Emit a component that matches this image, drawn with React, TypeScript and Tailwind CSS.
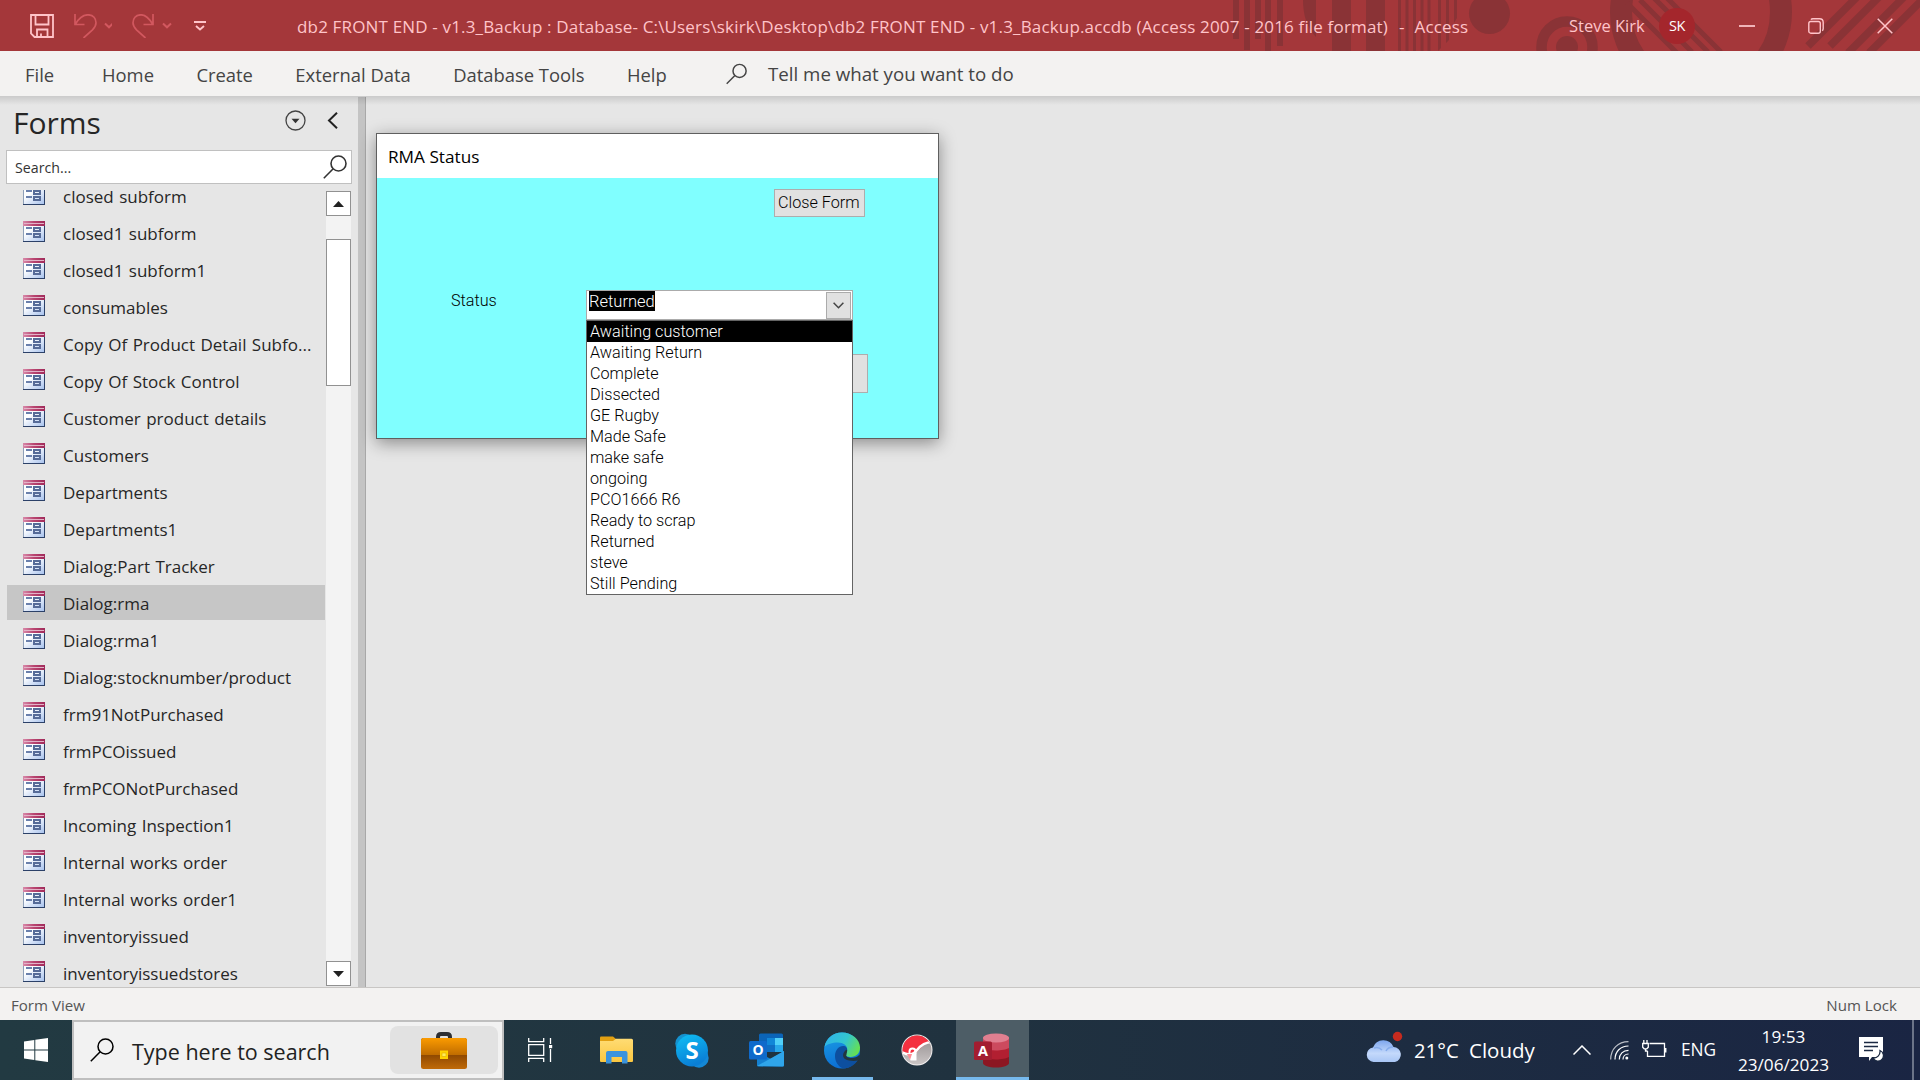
import { useState } from 'react'
import type { ReactNode } from 'react'

const TABS = ['Home', 'Create', 'External Data', 'Database Tools', 'Help']

const FORMS = [
  'closed subform',
  'closed1 subform',
  'closed1 subform1',
  'consumables',
  'Copy Of Product Detail Subfo...',
  'Copy Of Stock Control',
  'Customer product details',
  'Customers',
  'Departments',
  'Departments1',
  'Dialog:Part Tracker',
  'Dialog:rma',
  'Dialog:rma1',
  'Dialog:stocknumber/product',
  'frm91NotPurchased',
  'frmPCOissued',
  'frmPCONotPurchased',
  'Incoming Inspection1',
  'Internal works order',
  'Internal works order1',
  'inventoryissued',
  'inventoryissuedstores',
]

const STATUSES = [
  'Awaiting customer',
  'Awaiting Return',
  'Complete',
  'Dissected',
  'GE Rugby',
  'Made Safe',
  'make safe',
  'ongoing',
  'PCO1666 R6',
  'Ready to scrap',
  'Returned',
  'steve',
  'Still Pending',
]

function TitleArt() {
  return (
    <svg className="absolute top-0 left-[1220px]" width="700" height="51" viewBox="1220 0 700 51" fill="#8a3336">
      <rect x="1233" width="6" height="39" />
      <rect x="1244" width="6" height="50" />
      <rect x="1255" width="6" height="39" />
      <rect x="1265" width="6" height="51" />
      <rect x="1277" width="6" height="46" />
      <path d="M1303 0h13v37c-9-9-13-22-13-37z" />
      <rect x="1332" width="19" height="51" />
      <rect x="1366" width="19" height="51" />
      <path d="M1398 0h3v51h-3zM1405.500 0h3v51h-3zM1413 0h3v51h-3zM1420.500 0h3v51h-3zM1427.500 0h3v51h-3zM1438 0h3v48l-3 3zM1446 0h3v40l-3 3zM1454 0h3v18l-3 5z" />
      <circle cx="1489.500" cy="13.500" r="20.500" />
      <g fill="none" stroke="#8a3336">
        <circle cx="1567" cy="47" r="25.500" strokeWidth="10.500" />
        <circle cx="1701" cy="12" r="80" strokeWidth="22" />
        <path strokeWidth="5" d="M1627 3l50 50M1640 0l52 52M1652 -4l56 56M1663 -6l58 58" />
        <path strokeWidth="7.500" d="M1808 46l54-54M1830 46l54-54M1848 53l60-60M1869 53l60-60" />
      </g>
      <circle cx="1567" cy="47" r="11" />
    </svg>
  )
}

function Magnifier({ className, width = 1.6 }: { className: string; width?: number }) {
  return (
    <svg className={className} viewBox="0 0 24 24" fill="none" stroke="currentColor" strokeWidth={width}>
      <circle cx="15.500" cy="8.500" r="7.500" />
      <path d="M10.200 13.800L.8 23.200" />
    </svg>
  )
}

function FormIcon() {
  return (
    <svg width="22" height="21" viewBox="0 0 22 21" className="shrink-0">
      <defs>
        <linearGradient id="formBar" x1="0" x2="1">
          <stop offset="0" stopColor="#d88aaa" />
          <stop offset=".5" stopColor="#b8446f" />
          <stop offset="1" stopColor="#a02a5a" />
        </linearGradient>
        <linearGradient id="formBody" x1="0" y1="0" x2="1" y2="1">
          <stop offset=".3" stopColor="#fdfeff" />
          <stop offset="1" stopColor="#a9c3ee" />
        </linearGradient>
      </defs>
      <rect width="22" height="21" fill="#2c4168" />
      <rect width="1" height="20" fill="#8fa0b8" />
      <rect x="1" y="5" width="20" height="15" fill="url(#formBody)" />
      <rect width="22" height="5" fill="url(#formBar)" />
      <rect x="1" y="2" width="20" height="1" fill="#e3b4c8" />
      <path fill="#6a80ac" d="M3 6h6v2H3zM3 12h6v2H3z" />
      <path fill="#566b98" fillRule="evenodd" d="M10 6h8v5h-8zM12 8v1h4V8zM10 12h8v5h-8zM12 14v1h4v-1z" />
    </svg>
  )
}

function TitleBar() {
  return (
    <header className="relative flex h-[51px] shrink-0 items-center bg-[#a4373a] text-[#ffc4c9]">
      <TitleArt />
      <div className="relative flex w-[297px] items-center pl-[30px]">
        <svg width="24" height="24" viewBox="0 0 24 24" fill="none" stroke="currentColor" strokeWidth="1.800">
          <path d="M1 1h22v22H4.500L1 19.500zM5.500 1v9.500h13V1M7 23v-7.500h10.500V23M11 23v-3.500" />
        </svg>
        <svg className="ml-5" width="38" height="24" viewBox="0 0 38 24" fill="none" stroke="#d2585f" strokeWidth="1.700">
          <path d="M1 0v10.500h9.500M1.500 10C5 4 9 .8 14 .8c5.500 0 8 4 8 8 0 3-1.500 5-3.500 7L9.500 24" />
          <path d="M31 9.500l4 3.800 4-3.800" strokeWidth="2" />
        </svg>
        <svg className="ml-5" width="42" height="24" viewBox="0 0 42 24" fill="none" stroke="#d2585f" strokeWidth="1.700">
          <path d="M21 0v10.500h-9.500M20.500 10C17 4 13 .8 9 .8c-5.500 0-8 4-8 8 0 3 1.500 5 3.500 7l9 8.200" />
          <path d="M31 9.500l4 3.800 4-3.800" strokeWidth="2" />
        </svg>
        <svg className="ml-5" width="12" height="10" viewBox="0 0 12 10" fill="none" stroke="currentColor" strokeWidth="1.900">
          <path d="M0 1h12M2 5l4 3.500L10 5" />
        </svg>
      </div>
      <div className="relative flex w-[1272px] pt-[2px] text-[17px] tracking-[0.165px] whitespace-pre">
        <span>
          db2 FRONT END - v1.3_Backup : Database- C:\Users\skirk\Desktop\db2 FRONT END - v1.3_Backup.accdb (Access 2007 - 2016 file format)
        </span>
        <span className="pl-[11px]">-</span>
        <span className="pl-[10px]">Access</span>
      </div>
      <div className="relative flex flex-1 items-center">
        <span className="w-[90px] pt-[2px] text-[16.500px]">Steve Kirk</span>
        <span className="flex size-9 items-center justify-center rounded-full bg-[#a4262c] text-[14.500px] tracking-[-0.5px] text-white">
          SK
        </span>
        <span className="ml-11 h-0.5 w-4 bg-[#f0b4b8]" />
        <svg className="ml-[53px]" width="16" height="16" viewBox="0 0 16 16" fill="none" stroke="currentColor" strokeWidth="1.400">
          <rect x=".8" y="3.500" width="11.500" height="11.700" rx="2" />
          <path d="M3 1.700Q3.500.8 5 .8h6.500q3.700 0 3.700 3.700v6q0 1.500-1 2.200" />
        </svg>
        <svg className="ml-[53px]" width="16" height="16" viewBox="0 0 16 16" fill="none" stroke="currentColor" strokeWidth="1.500">
          <path d="M.7.7l14.600 14.600M15.300.7L.7 15.300" />
        </svg>
      </div>
    </header>
  )
}

function Ribbon() {
  return (
    <nav className="flex h-[45px] shrink-0 items-center bg-[#f3f2f1] pl-[25px] text-[18.400px] text-[#444]">
      <span className="w-[77px] pt-[3px]">File</span>
      <div className="flex w-[624px] gap-[42.400px] pt-[3px]">
        {TABS.map((tab) => (
          <span key={tab}>{tab}</span>
        ))}
      </div>
      <Magnifier className="h-[22px] w-[21px]" width={1.7} />
      <span className="pt-0.5 pl-[21px] text-[18.700px]">Tell me what you want to do</span>
    </nav>
  )
}

function NavPane({ selected, onSelect }: { selected: string; onSelect: (name: string) => void }) {
  return (
    <aside className="flex w-[358px] shrink-0 flex-col pt-[9px]">
      <div className="flex h-[45px] items-start pl-[13px] text-[#262626]">
        <h1 className="w-[272px] text-[30px] leading-[35px]">Forms</h1>
        <svg className="mt-[5px]" width="21" height="21" viewBox="0 0 21 21" fill="none" stroke="#444" strokeWidth="1.300">
          <circle cx="10.500" cy="10.500" r="9.500" />
          <path d="M6.500 8.800h8l-4 4.400z" fill="#333" stroke="none" />
        </svg>
        <svg className="mt-[7px] ml-[21px]" width="11" height="17" viewBox="0 0 11 17" fill="none" stroke="#222" strokeWidth="2">
          <path d="M10 .8L2 8.500l8 7.700" />
        </svg>
      </div>
      <div className="ml-[6px] flex h-[34px] w-[346px] items-center justify-between border border-[#c0c0c0] bg-white pr-1 pl-2 text-[#333]">
        <span className="pt-px text-[14.200px]">Search...</span>
        <Magnifier className="size-6" />
      </div>
      <div className="mt-[6px] flex min-h-0 flex-1">
        <ul className="w-[326px] overflow-hidden pl-[7px] text-[17px] [word-spacing:1px] text-[#262626]">
          {FORMS.map((name) => (
            <li
              key={name}
              onClick={() => onSelect(name)}
              className={`mb-0.5 flex h-[35px] w-[318px] items-center pl-4 whitespace-nowrap first:-mt-3 ${
                name === selected ? 'bg-[#c6c6c6]' : ''
              }`}
            >
              <span className="-mt-[2px]">
                <FormIcon />
              </span>
              <span className="pt-[3px] pl-[18px]">{name}</span>
            </li>
          ))}
        </ul>
        <div className="mt-px mb-px flex w-[25px] flex-col justify-between bg-[#f3f3f3]">
          <div>
            <div className="flex h-[25px] items-center justify-center border border-[#919191] bg-white">
              <svg width="11" height="6" viewBox="0 0 11 6" fill="#222">
                <path d="M0 6L5.500 0 11 6z" />
              </svg>
            </div>
            <div className="mt-[23px] h-[147px] border border-[#919191] bg-white" />
          </div>
          <div className="flex h-[25px] items-center justify-center border border-[#919191] bg-white">
            <svg width="11" height="6" viewBox="0 0 11 6" fill="#222">
              <path d="M0 0h11L5.500 6z" />
            </svg>
          </div>
        </div>
      </div>
    </aside>
  )
}

function RmaDialog() {
  const [active, setActive] = useState(0)

  return (
    <section className="h-[306px] w-[563px] border border-[#5f5f5f] bg-[#80ffff] shadow-[0_4px_16px_rgba(0,0,0,0.4)]">
      <h2 className="flex h-[44px] items-center bg-white pt-[2px] pl-[11px] text-[17.200px] text-black">RMA Status</h2>
      <div className="pt-[11px] font-['Roboto',sans-serif] text-[16.200px] font-light text-black">
        <button className="ml-[397px] flex h-[28px] w-[91px] items-start border border-[#adadad] bg-[#e1e1e1] pl-[3px] leading-[26px] whitespace-nowrap">
          Close Form
        </button>
        <div className="mt-[73px] flex h-[30px] items-start pl-[74px]">
          <label className="w-[135px] leading-[21px]">Status</label>
          <div className="relative flex h-[30px] w-[267px] items-start justify-between border border-[#ababab] bg-white pr-px pl-0.5">
            <span className="h-5 bg-black text-[16.500px] leading-[21px] text-white">Returned</span>
            <span className="mt-px flex h-[27px] w-[25px] items-center justify-center border border-[#ababab] bg-[#e1e1e1]">
              <svg width="11" height="7" viewBox="0 0 11 7" fill="none" stroke="#444" strokeWidth="1.500">
                <path d="M.6.7l4.900 5L10.400.7" />
              </svg>
            </span>
            <ul className="absolute top-[29px] -left-px z-20 w-[267px] border border-[#646464] bg-white">
              {STATUSES.map((status, i) => (
                <li
                  key={status}
                  onMouseEnter={() => setActive(i)}
                  className={`h-[21px] pl-[3px] leading-[21px] ${i === active ? 'bg-black text-white' : ''}`}
                >
                  {status}
                </li>
              ))}
            </ul>
          </div>
        </div>
        <div className="mt-[34px] ml-[300px] h-[39px] w-[191px] border border-[#adadad] bg-[#e1e1e1]" />
      </div>
    </section>
  )
}

function BriefcaseIcon() {
  return (
    <svg width="46" height="37" viewBox="0 0 46 37">
      <defs>
        <linearGradient id="caseTop" x1="0" x2="0" y1="0" y2="1">
          <stop offset="0" stopColor="#fb9b00" />
          <stop offset="1" stopColor="#c06c00" />
        </linearGradient>
        <linearGradient id="caseLow" x1="0" x2="0" y1=".5" y2="1">
          <stop offset="0" stopColor="#8a4500" />
          <stop offset="1" stopColor="#c06a08" />
        </linearGradient>
      </defs>
      <path d="M17 7V5q0-3 3-3h6q3 0 3 3v2" fill="none" stroke="#2d2f33" strokeWidth="4" />
      <rect y="6" width="46" height="31" rx="2.500" fill="url(#caseLow)" />
      <path d="M0 8.500Q0 6 2.500 6h41Q46 6 46 8.500V23H0z" fill="url(#caseTop)" />
      <rect x="19" y="18.500" width="8" height="8.500" fill="#ffd400" />
      <rect x="21" y="21" width="4" height="3.500" fill="#ffee58" stroke="#e0a800" strokeWidth=".6" />
    </svg>
  )
}

function TaskViewIcon() {
  return (
    <svg width="25" height="24" viewBox="0 0 25 24" fill="none" stroke="#fff" strokeWidth="1.300">
      <path d="M.7 0v3.700h15V0M.7 24v-3.700h15V24M.7 6.700h15v10.600H.7zM22.500 0v6M22.500 11v13" />
      <rect x="21" y="7" width="3.200" height="3.200" fill="#fff" stroke="none" />
    </svg>
  )
}

function FolderIcon() {
  return (
    <svg width="33" height="28" viewBox="0 0 33 28">
      <defs>
        <linearGradient id="folder" x1="0" x2="0" y1="0" y2="1">
          <stop offset="0" stopColor="#ffdc74" />
          <stop offset="1" stopColor="#fbc740" />
        </linearGradient>
      </defs>
      <path d="M0 1.500Q0 .5 1 .5h12l3 2.500v4H0z" fill="#e2a012" />
      <path d="M0 5h13l3-2.300h15.500q1.500 0 1.500 1.500V25q0 1-1 1H1q-1 0-1-1z" fill="url(#folder)" />
      <path d="M6 27.500V17q0-2 2-2h17.500q2 0 2 2v10.500H22V21H11.500v6.500z" fill="#3a93dd" />
    </svg>
  )
}

function SkypeIcon() {
  return (
    <svg width="34" height="35" viewBox="0 0 34 35">
      <defs>
        <linearGradient id="skype" x1="0" x2=".4" y1="0" y2="1">
          <stop offset="0" stopColor="#0fc0f5" />
          <stop offset="1" stopColor="#0a7fd6" />
        </linearGradient>
      </defs>
      <circle cx="10" cy="10.500" r="9.700" fill="#1592cf" />
      <circle cx="24" cy="25" r="9.700" fill="#1488d6" />
      <circle cx="17" cy="17.500" r="16" fill="url(#skype)" />
      <text x="17" y="26" textAnchor="middle" fill="#fff" fontSize="24" fontWeight="700" fontFamily="Open Sans">
        S
      </text>
    </svg>
  )
}

function OutlookIcon() {
  return (
    <svg width="36" height="34" viewBox="0 0 36 34">
      <path d="M10 2q0-1.500 1.500-1.500h21Q34 .5 34 2v17H10z" fill="#0b64b8" />
      <path d="M18 5h8v7h-8z" fill="#1187d8" />
      <path d="M26 5h8v7h-8z" fill="#28a8ea" />
      <path d="M18 12h8v7h-8z" fill="#0f6fc4" />
      <path d="M26 5h8v7h-8z" fill="#50d0f8" />
      <path d="M26 12h8v7h-8z" fill="#28a8ea" />
      <path d="M8 19l14 7 13-8v14q0 1.500-1.500 1.500h-24Q8 33.500 8 32z" fill="#1480d0" />
      <path d="M8 33l27-15v14q0 1.500-1.500 1.500z" fill="#2fa5ea" />
      <rect y="8" width="18" height="18.500" rx="1.500" fill="#0f6acb" />
      <text x="9" y="22.300" textAnchor="middle" fill="#fff" fontSize="14" fontWeight="700" fontFamily="Open Sans">
        O
      </text>
    </svg>
  )
}

function EdgeIcon() {
  return (
    <svg width="36" height="37" viewBox="0 0 36 37">
      <defs>
        <linearGradient id="edgeTop" x1="0" x2="1" y1=".2" y2=".6">
          <stop offset="0" stopColor="#2fb3ea" />
          <stop offset=".55" stopColor="#33c6cf" />
          <stop offset="1" stopColor="#66e052" />
        </linearGradient>
        <linearGradient id="edgeBody" x1="0" x2=".3" y1="0" y2="1">
          <stop offset="0" stopColor="#1ba0e6" />
          <stop offset="1" stopColor="#0c6fd4" />
        </linearGradient>
      </defs>
      <circle cx="18" cy="18.500" r="18" fill="url(#edgeBody)" />
      <path d="M11 24c0-6 4-10 8-10 3 0 5 2 4 5-2 2-2 5 1 6 4 1.500 9 1 12-1-3 8-10 12.500-17 12.500-5-2-8-7-8-12.500z" fill="#0d4f9f" />
      <path d="M.5 15C2 6 9 .5 18 .5c10 0 18 7 18 15 0 6-4 9.500-9.500 9.500-3 0-5-1.200-5-2.800 0-1.400 1.800-2 1.800-4.700 0-4-4-7-9.300-7C8 10.500 3 12 .5 15z" fill="url(#edgeTop)" />
      <path d="M22.500 22.500c-1 2 1 3.500 5 3.500 3 0 6-1 7.800-3.200L36 25l-2 3.500c-3.500.8-9 .8-13-1.500-2.500-2-2.500-5-.5-7.500 1-1.300 2-2 2.700-1.500 0 2-.7 3.500-.7 4.500z" fill="#22353f" />
    </svg>
  )
}

function VpnIcon() {
  return (
    <svg width="32" height="34" viewBox="0 0 32 34">
      <defs>
        <linearGradient id="vpnGrey" x1="0" x2="0" y1="0" y2="1">
          <stop offset="0" stopColor="#8d8788" />
          <stop offset="1" stopColor="#cfcaca" />
        </linearGradient>
        <clipPath id="vpnClip">
          <circle cx="16" cy="17" r="14.500" />
        </clipPath>
      </defs>
      <circle cx="16" cy="17" r="15.500" fill="#f1eeee" />
      <g clipPath="url(#vpnClip)">
        <rect width="32" height="34" fill="url(#vpnGrey)" />
        <path d="M0 0h32v9C24 10 20 14 15 20c-3 4-7 3-15 0z" fill="#f4303f" />
        <path d="M0 19c8 4 12 3 16-2 4-5 8-8 16-8" fill="none" stroke="#fff" strokeWidth="2.500" />
      </g>
      <path d="M8.500 21v-2.500a3 3 0 0 1 6 0V21" fill="none" stroke="#fff" strokeWidth="2" />
      <path d="M6.500 20.500h9v7h-6z" fill="#fff" />
      <path d="M6 21h5l-2 6z" fill="#ff8d95" />
    </svg>
  )
}

function AccessIcon() {
  return (
    <svg width="36" height="35" viewBox="0 0 36 35">
      <path d="M9 4h26v26c0 2.500-6 4.500-13 4.500S9 32.500 9 30z" fill="#8c1622" />
      <path d="M9 4h26v20c-5 3-20 3.500-26 0z" fill="#b21f31" />
      <path d="M9 4h26v11c-5 3-20 3.500-26 0z" fill="#cc4a5e" />
      <ellipse cx="22" cy="5" rx="13" ry="4.500" fill="#e07f90" />
      <rect y="8.500" width="18" height="18.500" rx="1.500" fill="#a31d30" />
      <text x="9" y="23" textAnchor="middle" fill="#fff" fontSize="14.500" fontWeight="700" fontFamily="Open Sans">
        A
      </text>
    </svg>
  )
}

function TaskButton({ children, open, active }: { children: ReactNode; open?: boolean; active?: boolean }) {
  return (
    <div
      className={`relative flex h-full items-center justify-center ${active ? 'w-[73px] bg-[#4d5d66]' : 'w-[75.500px]'}`}
    >
      {children}
      {open && <span className="absolute bottom-0 h-[3px] w-[61px] bg-[#76b9ed]" />}
      {active && <span className="absolute bottom-0 h-[3px] w-full bg-[#76b9ed]" />}
    </div>
  )
}

function Tray() {
  return (
    <div className="ml-auto flex h-full w-[554px] items-center text-white">
      <svg width="37" height="34" viewBox="0 0 37 34" className="-mt-2">
        <defs>
          <linearGradient id="cloud" x1="0" x2="0" y1="0" y2="1">
            <stop offset="0" stopColor="#7da6ee" />
            <stop offset=".6" stopColor="#c4d9fb" />
            <stop offset="1" stopColor="#a9c6f5" />
          </linearGradient>
        </defs>
        <path d="M7.500 33a7.300 7.300 0 0 1-.5-14.500A11 11 0 0 1 27.500 18 7.600 7.600 0 0 1 29 33z" fill="url(#cloud)" />
        <path d="M8 19c3-1 6 0 8 2M27 18c-4 0-6 2-7 4" fill="none" stroke="#86acec" strokeWidth="1.500" />
        <circle cx="31.500" cy="7.500" r="4.700" fill="#c62b1f" />
      </svg>
      <span className="w-[56px] pt-px pl-[11px] text-[20.300px]">21°C</span>
      <span className="w-[114px] pt-px pl-[10px] text-[20.500px]">Cloudy</span>
      <svg width="18" height="10" viewBox="0 0 18 10" fill="none" stroke="#fff" strokeWidth="1.500">
        <path d="M.5 9.500L9 1l8.500 8.500" />
      </svg>
      <svg className="ml-[19px]" width="19" height="19" viewBox="0 0 19 19" fill="none" stroke="#fff" strokeWidth="1.200">
        <path d="M.7 18.500C.7 8 8 .7 18.500.7" opacity=".7" />
        <path d="M5 18.500C5 10.500 10.500 5 18.500 5M9.300 18.500c0-5.500 3.700-9.200 9.200-9.200M13 18.500c0-3 2-5.500 5.500-5.500" />
        <circle cx="16.800" cy="17" r="1.500" fill="#fff" stroke="none" />
      </svg>
      <svg className="-mt-[3px] ml-[13px]" width="25" height="17" viewBox="0 0 25 17" fill="none" stroke="#fff" strokeWidth="1.300">
        <path d="M7.500 3.500h15v12.800H5.500V11M23.800 8v4.500" />
        <path d="M1.800 0v3M5 0v3M.7 3.500h5.600v3.700L4.800 8.800H2.200L.7 7.200zM3.500 8.800V11h2" />
      </svg>
      <span className="w-[53px] pl-[14px] text-[17.300px]">ENG</span>
      <div className="ml-4 flex w-[95px] flex-col items-center pt-px text-[17.200px] leading-[28px]">
        <span>19:53</span>
        <span>23/06/2023</span>
      </div>
      <svg className="ml-[28px]" width="25" height="26" viewBox="0 0 25 26" fill="#fff">
        <path d="M0 0h24v20H13l-3 4v-4H0z" />
        <path d="M5 5.500h14M5 9.500h14M5 13.500h9" stroke="#1b2942" strokeWidth="1.300" />
        <path d="M21 13.500a5.500 5.500 0 1 1-7 7.500c4 .5 7.500-3 7-7.500z" stroke="#1b2942" strokeWidth="1.300" />
      </svg>
      <span className="ml-auto mr-[6px] h-full w-0.5 bg-[#6b7488]" />
    </div>
  )
}

function Taskbar() {
  return (
    <footer className="flex h-[60px] shrink-0 items-center bg-linear-to-r from-[#223a42] via-[#20323f] to-[#1a2543]">
      <div className="flex w-[72px] justify-center">
        <svg width="24" height="24" viewBox="0 0 24 24" fill="#fff">
          <path d="M0 3.400L10.300 2v9.500H0zM11.300 1.800L24 0v11.500H11.300zM0 12.500h10.300V22L0 20.600zM11.300 12.500H24V24l-12.700-1.800z" />
        </svg>
      </div>
      <div className="flex h-full w-[432px] items-center border-2 border-[#bfbfbf] bg-[#f2f2f2] pr-1 text-[#222]">
        <Magnifier className="ml-4 size-6 text-black" width={1.5} />
        <span className="pt-1 pl-[18px] text-[21.500px]">Type here to search</span>
        <div className="ml-auto flex h-12 w-[108px] items-center justify-center rounded-lg bg-[#e2e2e2]">
          <BriefcaseIcon />
        </div>
      </div>
      <div className="flex w-[74px] justify-center pr-0.5">
        <TaskViewIcon />
      </div>
      <TaskButton>
        <span className="ml-0.5">
          <FolderIcon />
        </span>
      </TaskButton>
      <TaskButton>
        <span className="ml-0.5">
          <SkypeIcon />
        </span>
      </TaskButton>
      <TaskButton>
        <OutlookIcon />
      </TaskButton>
      <TaskButton open>
        <EdgeIcon />
      </TaskButton>
      <TaskButton>
        <span className="mr-0.5">
          <VpnIcon />
        </span>
      </TaskButton>
      <TaskButton active>
        <AccessIcon />
      </TaskButton>
      <Tray />
    </footer>
  )
}

export default function App() {
  const [selected, setSelected] = useState('Dialog:rma')

  return (
    <div className="flex h-[1080px] w-[1920px] flex-col overflow-hidden bg-[#e6e6e6] font-['Open_Sans',sans-serif]">
      <TitleBar />
      <Ribbon />
      <div className="relative flex min-h-0 flex-1">
        <div className="absolute inset-x-0 top-0 h-[9px] bg-linear-to-b from-black/12 to-transparent" />
        <NavPane selected={selected} onSelect={setSelected} />
        <div className="mt-px w-2 shrink-0 border-r border-[#a8a8a8] bg-[#c4c4c4]" />
        <main className="flex-1 pt-[37px] pl-[10px]">
          <RmaDialog />
        </main>
      </div>
      <div className="flex h-[33px] shrink-0 items-center justify-between border-t border-[#c8c6c4] bg-[#f3f2f1] pt-0.5 pr-[23px] pl-[11px] text-[15.100px] text-[#555]">
        <span>Form View</span>
        <span>Num Lock</span>
      </div>
      <Taskbar />
    </div>
  )
}
